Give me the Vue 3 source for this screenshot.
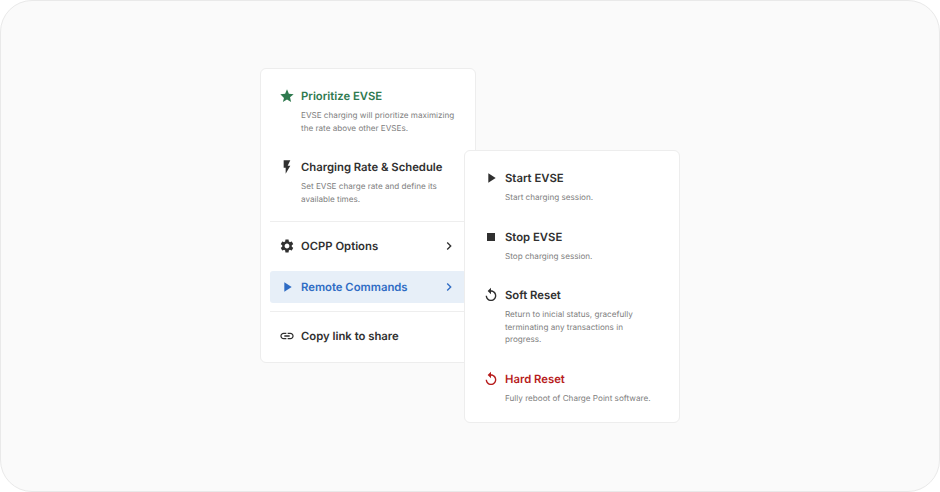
<template>
  <div class="frame">
    <div class="menus">
      <div class="menu main">
        <div v-for="item in primary" :key="item.title" :class="['item', item.tone]">
          <div class="head">
            <svg class="icon" viewBox="0 0 24 24"><path :d="item.icon" /></svg>
            <span class="title">{{ item.title }}</span>
          </div>
          <p class="desc">{{ item.desc }}</p>
        </div>
        <hr class="line" />
        <div class="row-group">
          <div v-for="row in rows" :key="row.title" :class="['row', { active: row.active }]">
            <svg class="icon" viewBox="0 0 24 24"><path :d="row.icon" /></svg>
            <span class="title">{{ row.title }}</span>
            <svg class="icon chevron" viewBox="0 0 24 24"><path :d="chevron" /></svg>
          </div>
        </div>
        <hr class="line" />
        <div class="row">
          <svg class="icon" viewBox="0 0 24 24"><path :d="icons.link" /></svg>
          <span class="title">Copy link to share</span>
        </div>
      </div>

      <div class="menu sub">
        <div v-for="item in commands" :key="item.title" :class="['item', item.tone]">
          <div class="head">
            <svg class="icon" viewBox="0 0 24 24"><path :d="item.icon" /></svg>
            <span class="title">{{ item.title }}</span>
          </div>
          <p class="desc">{{ item.desc }}</p>
        </div>
      </div>
    </div>
  </div>
</template>

<script setup>
const icons = {
  star: 'M12 17.27L18.18 21l-1.64-7.03L22 9.24l-7.19-.61L12 2 9.19 8.63 2 9.24l5.46 5.73L5.82 21z',
  bolt: 'M7 2v11h3v9l7-12h-4l4-8z',
  gear: 'M19.14 12.94c.04-.3.06-.61.06-.94 0-.32-.02-.64-.07-.94l2.03-1.58c.18-.14.23-.41.12-.61l-1.92-3.32c-.12-.22-.37-.29-.59-.22l-2.39.96c-.5-.38-1.03-.7-1.62-.94l-.36-2.54c-.04-.24-.24-.41-.48-.41h-3.84c-.24 0-.43.17-.47.41l-.36 2.54c-.59.24-1.13.57-1.62.94l-2.39-.96c-.22-.08-.47 0-.59.22L2.74 8.87c-.12.21-.08.47.12.61l2.03 1.58c-.05.3-.09.63-.09.94s.02.64.07.94l-2.03 1.58c-.18.14-.23.41-.12.61l1.92 3.32c.12.22.37.29.59.22l2.39-.96c.5.38 1.03.7 1.62.94l.36 2.54c.05.24.24.41.48.41h3.84c.24 0 .44-.17.47-.41l.36-2.54c.59-.24 1.13-.56 1.62-.94l2.39.96c.22.08.47 0 .59-.22l1.92-3.32c.12-.22.07-.47-.12-.61l-2.01-1.58zM12 15.6c-1.98 0-3.6-1.62-3.6-3.6s1.62-3.6 3.6-3.6 3.6 1.62 3.6 3.6-1.62 3.6-3.6 3.6z',
  play: 'M8 5v14l11-7z',
  stop: 'M6 6h12v12H6z',
  reset: 'M12 5V1L7 6l5 5V7c3.31 0 6 2.69 6 6s-2.69 6-6 6-6-2.69-6-6H4c0 4.42 3.58 8 8 8s8-3.58 8-8-3.58-8-8-8z',
  link: 'M3.9 12c0-1.71 1.39-3.1 3.1-3.1h4V7H7c-2.76 0-5 2.24-5 5s2.24 5 5 5h4v-1.9H7c-1.71 0-3.1-1.39-3.1-3.1zM8 13h8v-2H8v2zm9-6h-4v1.9h4c1.71 0 3.1 1.39 3.1 3.1s-1.39 3.1-3.1 3.1h-4V17h4c2.76 0 5-2.24 5-5s-2.24-5-5-5z'
}

const chevron = 'M10 6L8.59 7.41 13.17 12l-4.58 4.59L10 18l6-6z'

const primary = [
  {
    title: 'Prioritize EVSE',
    desc: 'EVSE charging will prioritize maximizing the rate above other EVSEs.',
    icon: icons.star,
    tone: 'green'
  },
  {
    title: 'Charging Rate & Schedule',
    desc: 'Set EVSE charge rate and define its available times.',
    icon: icons.bolt
  }
]

const rows = [
  { title: 'OCPP Options', icon: icons.gear },
  { title: 'Remote Commands', icon: icons.play, active: true }
]

const commands = [
  { title: 'Start EVSE', desc: 'Start charging session.', icon: icons.play },
  { title: 'Stop EVSE', desc: 'Stop charging session.', icon: icons.stop },
  {
    title: 'Soft Reset',
    desc: 'Return to inicial status, gracefully terminating any transactions in progress.',
    icon: icons.reset
  },
  {
    title: 'Hard Reset',
    desc: 'Fully reboot of Charge Point software.',
    icon: icons.reset,
    tone: 'red'
  }
]
</script>

<style>
html,
body {
  margin: 0;
  background: #fff;
}
</style>

<style scoped>
.frame {
  box-sizing: border-box;
  width: 940px;
  height: 492px;
  display: flex;
  align-items: center;
  justify-content: center;
  background: #fafafa;
  border: 1px solid #e9e9e9;
  border-radius: 32px;
  font-family: Inter, "Liberation Sans", sans-serif;
  text-rendering: geometricPrecision;
  color: #303030;
}
.menus {
  display: flex;
  align-items: flex-start;
  padding-bottom: 1px;
}
.menu {
  box-sizing: border-box;
  width: 216px;
  padding: 10px 9px 9px;
  background: #fff;
  border: 1px solid #ededed;
  border-radius: 6px;
  display: flex;
  flex-direction: column;
  gap: 8px;
}
.sub {
  position: relative;
  margin-left: -12px;
  margin-top: 82px;
  padding-bottom: 10px;
}
.item {
  padding: 8px 9px;
}
.head,
.row {
  display: flex;
  align-items: center;
  gap: 6px;
  height: 18px;
}
.row {
  height: 32.5px;
  padding: 0 9px;
  border-radius: 3px;
}
.row-group {
  display: flex;
  flex-direction: column;
  gap: 8px;
}
.icon {
  flex: none;
  width: 16px;
  height: 16px;
  fill: currentColor;
}
.title {
  font-size: 11.3px;
  font-weight: 600;
  line-height: 18px;
}
.desc {
  margin: 4px 0 0 22px;
  font-size: 8.15px;
  line-height: 12.5px;
  color: #808080;
}
.chevron {
  margin-left: auto;
}
.line {
  width: 100%;
  margin: 0;
  border: 0;
  border-top: 1px solid #eeeeee;
}
.green {
  color: #2f7a4f;
}
.red {
  color: #b71c1c;
}
.active {
  background: #e7eff8;
  color: #2f6cc4;
}
</style>
